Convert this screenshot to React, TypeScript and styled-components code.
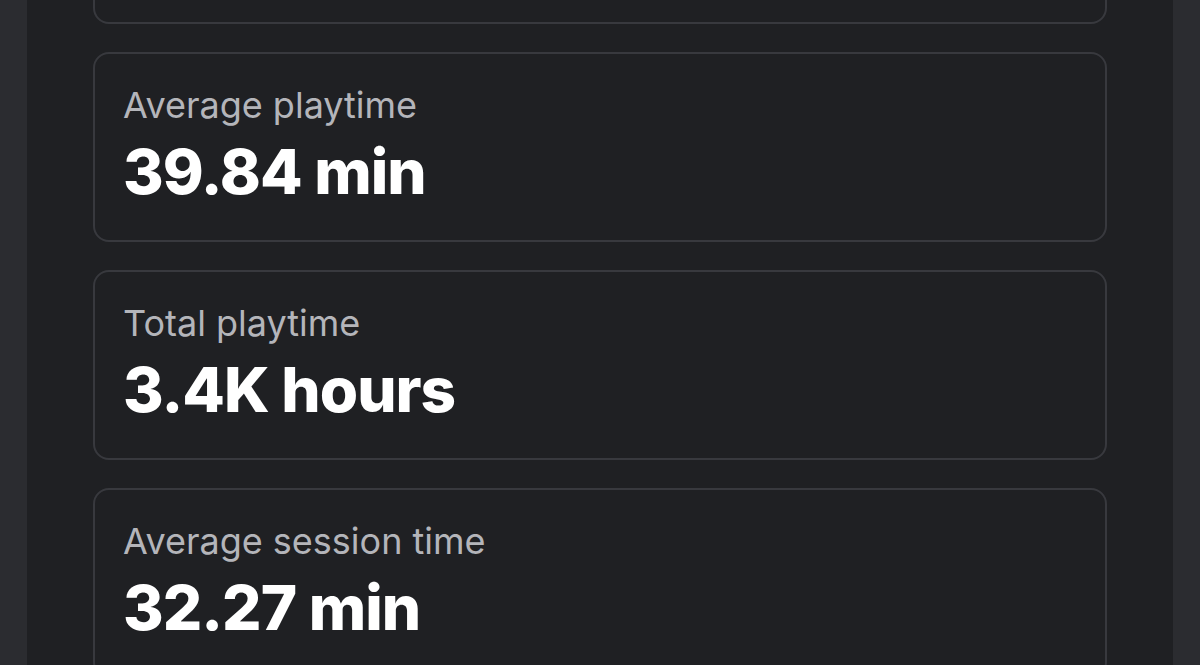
import React, { FC } from 'react';
import styled, { createGlobalStyle } from 'styled-components';

const GlobalStyle = createGlobalStyle`
  html, body {
    margin: 0;
    padding: 0;
    background-color: #2b2c30;
    height: 100%;
    overflow: hidden;
  }
  #root {
    height: 100%;
  }
`;

//Page frame
const Page = styled.div`
  height: 100%;
  padding: 0 27px;
  box-sizing: border-box;
`;

const Panel = styled.div`
  height: 100%;
  background-color: #1f2023;
  padding: 0 66px;
  box-sizing: border-box;
  overflow: hidden;
`;

// list is scrolled: the first card only shows its bottom edge
const StatList = styled.div`
  display: flex;
  flex-direction: column;
  gap: 28px;
  margin-top: -166px;
`;

//Cards
const Card = styled.div`
  height: 190px;
  box-sizing: border-box;
  border: 2px solid #38393e;
  border-radius: 16px;
  padding: 29px 28px 0;
  display: flex;
  flex-direction: column;
  font-family: 'Inter', 'Noto Sans', sans-serif;
`;

const Label = styled.div`
  color: #b4b5ba;
  font-size: 36px;
  line-height: 44px;
  font-weight: 400;
`;

const Value = styled.div`
  color: #ffffff;
  font-size: 62px;
  line-height: 1.2;
  margin-top: 8px;
  font-weight: 800;
  letter-spacing: -1px;
`;

type Stat = { label: string; value: string };

const stats: Stat[] = [
  { label: 'Average playtime', value: '39.84 min' },
  { label: 'Total playtime', value: '3.4K hours' },
  { label: 'Average session time', value: '32.27 min' },
];

const App: FC = () => {
  return (
    <>
      <GlobalStyle />
      <Page>
        <Panel>
          <StatList>
            <Card />
            {stats.map((s) => (
              <Card key={s.label}>
                <Label>{s.label}</Label>
                <Value>{s.value}</Value>
              </Card>
            ))}
          </StatList>
        </Panel>
      </Page>
    </>
  );
};

export default App;
